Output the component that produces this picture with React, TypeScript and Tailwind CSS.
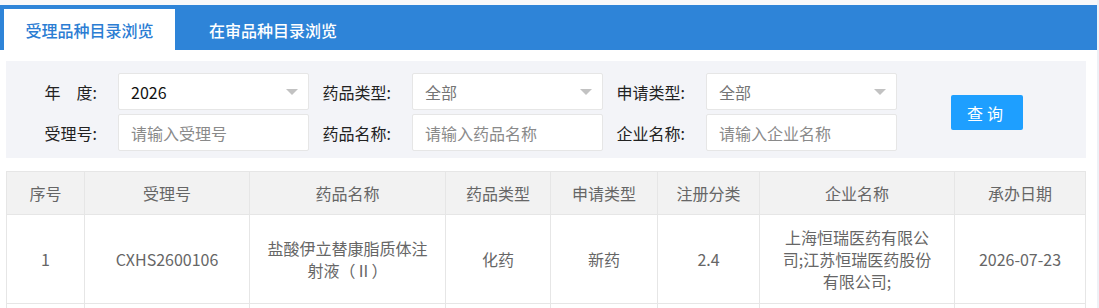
const font = { fontFamily: '"Noto Sans CJK SC", "Noto Sans", sans-serif' }

const Select = ({ value, muted }: { value: string; muted?: boolean }) => (
  <div className="relative flex h-[37px] w-[191px] items-center rounded-[2px] border border-[#e6e6e6] bg-white pl-[12px]">
    <span className={muted ? 'text-[#757575]' : 'text-[#111]'}>{value}</span>
    <span className="absolute right-[10px] top-[15px] h-0 w-0 border-x-[6px] border-t-[6px] border-x-transparent border-t-[#c2c2c2]" />
  </div>
)

const Input = ({ placeholder }: { placeholder: string }) => (
  <div className="flex h-[37px] w-[191px] items-center rounded-[2px] border border-[#e6e6e6] bg-white pl-[12px] text-[#8a8a8a]">
    {placeholder}
  </div>
)

const Label = ({ children }: { children: string }) => (
  <div className="w-[91px] whitespace-pre pr-[21px] text-right text-[#222]">{children}</div>
)

const columns = [
  { title: '序号', width: 'w-[78px]' },
  { title: '受理号', width: 'w-[165px]' },
  { title: '药品名称', width: 'w-[196px]' },
  { title: '药品类型', width: 'w-[105px]' },
  { title: '申请类型', width: 'w-[107px]' },
  { title: '注册分类', width: 'w-[102px]' },
  { title: '企业名称', width: 'w-[195px]' },
  { title: '承办日期', width: 'w-[131px]' },
]

const rows = [
  ['1', 'CXHS2600106', '盐酸伊立替康脂质体注射液（Ⅱ）', '化药', '新药', '2.4', '上海恒瑞医药有限公司;江苏恒瑞医药股份有限公司;', '2026-07-23'],
  ['', '', '', '', '', '', '', ''],
]

export default function App() {
  return (
    <div className="flex h-[308px] w-[1099px] overflow-hidden bg-white text-[16px]" style={font}>
      <div className="w-[1097px] shrink-0">
        {/* Tabs */}
        <div className="h-[5px] bg-[#f7f8fa]" />
        <div className="flex h-[45px] items-end bg-[#2e84d8] pl-[4px]">
          <div className="flex h-[41px] w-[171px] items-center justify-center bg-white font-medium text-[#2b7dd3]">
            受理品种目录浏览
          </div>
          <div className="flex h-[41px] items-center pl-[34px] font-medium text-white">在审品种目录浏览</div>
        </div>

        {/* Filters */}
        <div className="mx-[6px] mt-[11px] flex h-[97px] w-[1080px] items-start bg-[#f3f4f8] pl-[21px] pt-[12px]">
          <div className="flex flex-col gap-[4px]">
            <div className="flex items-center">
              <Label>{'年　度:'}</Label>
              <Select value="2026" />
              <div className="w-[12px]" />
              <Label>药品类型:</Label>
              <Select value="全部" muted />
              <div className="w-[12px]" />
              <Label>申请类型:</Label>
              <Select value="全部" muted />
            </div>
            <div className="flex items-center">
              <Label>受理号:</Label>
              <Input placeholder="请输入受理号" />
              <div className="w-[12px]" />
              <Label>药品名称:</Label>
              <Input placeholder="请输入药品名称" />
              <div className="w-[12px]" />
              <Label>企业名称:</Label>
              <Input placeholder="请输入企业名称" />
            </div>
          </div>
          <button className="ml-[54px] mt-[22px] h-[35px] w-[72px] rounded-[2px] bg-[#1e9fff] tracking-[4px] text-white">
            查询
          </button>
        </div>

        {/* Table */}
        <table className="mx-[6px] mt-[13px] w-[1079px] table-fixed border-collapse text-[#666]">
          <thead>
            <tr className="bg-[#f2f2f2]">
              {columns.map((c) => (
                <th key={c.title} className={`${c.width} border border-[#e6e6e6] py-[10px] text-center font-normal leading-[22px]`}>
                  {c.title}
                </th>
              ))}
            </tr>
          </thead>
          <tbody>
            {rows.map((r, i) => (
              <tr key={i}>
                {r.map((cell, j) => (
                  <td key={j} className="h-[89px] border border-[#e6e6e6] px-[16px] py-[11px] text-center leading-[22px]">
                    <div className={j === 6 ? 'mx-auto max-w-[150px]' : ''}>{cell}</div>
                  </td>
                ))}
              </tr>
            ))}
          </tbody>
        </table>
      </div>
      <div className="w-[2px] bg-[#eef1f6]" />
    </div>
  )
}
